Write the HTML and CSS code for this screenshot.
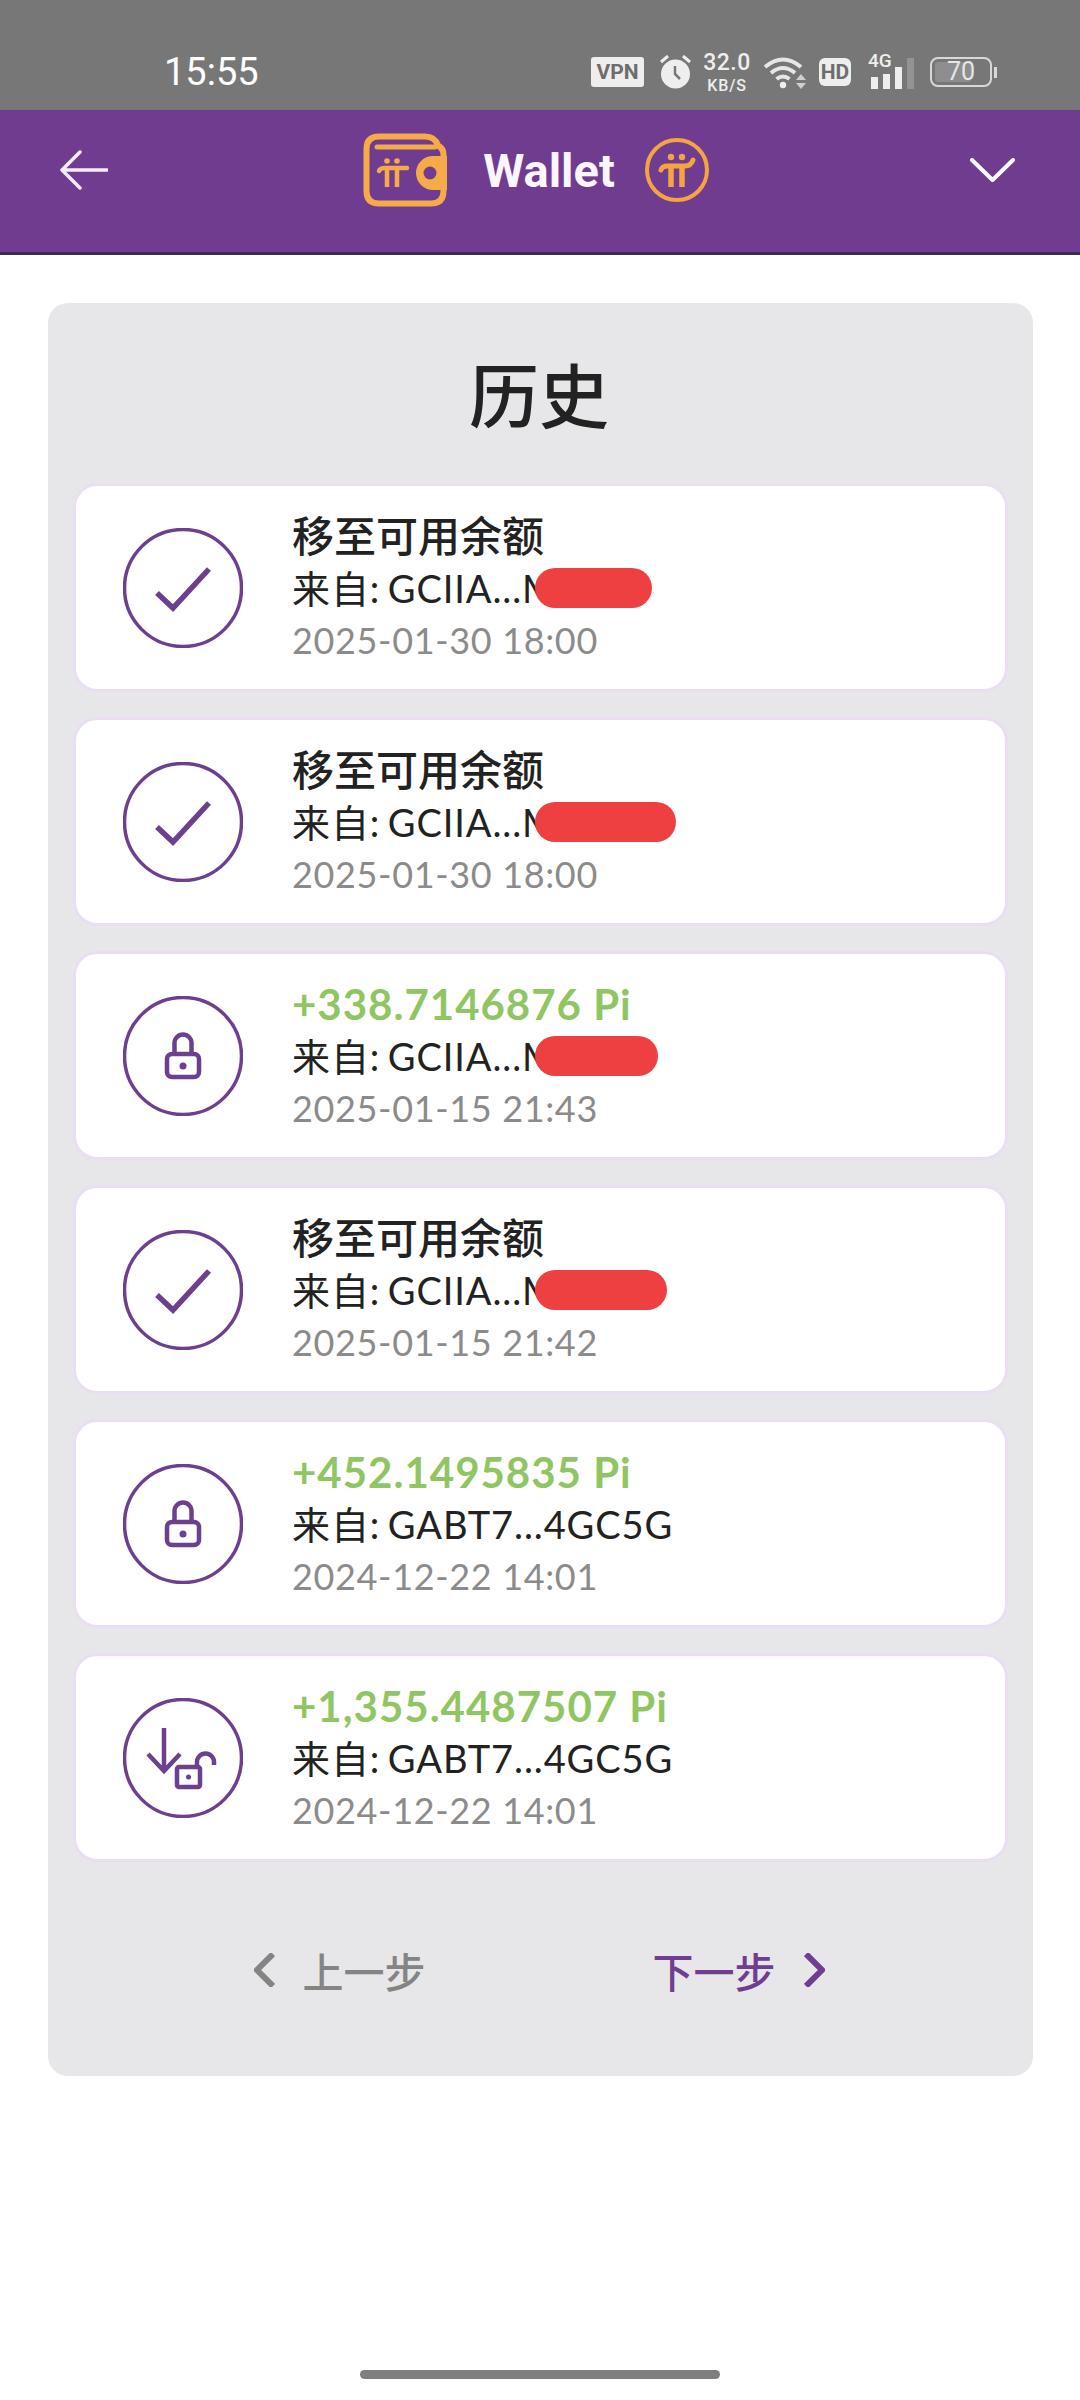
FILE: index.html
```html
<!DOCTYPE html>
<html lang="zh-CN">
<head>
<meta charset="UTF-8">
<meta name="viewport" content="width=device-width, initial-scale=1.0">
<title>Wallet</title>
<link rel="stylesheet" href="styles.css">
</head>
<body>

<div class="status-bar">
  <span class="time">15:55</span>
  <div class="status-icons">
    <span class="badge-vpn">VPN</span>
    <svg class="ic-alarm" width="31" height="34" viewBox="0 0 31 34">
      <circle cx="15.5" cy="19" r="14.5" fill="#eee"/>
      <path d="M15 11v8l5 5" fill="none" stroke="#777" stroke-width="2.5"/>
      <path d="M1 7l7-6M30 7l-7-6" fill="none" stroke="#eee" stroke-width="3"/>
    </svg>
    <div class="speed"><span class="speed-num">32.0</span><span class="speed-unit">KB/S</span></div>
    <svg width="43" height="34" viewBox="0 0 43 34">
      <g fill="none" stroke="#e6e6e6" stroke-width="4">
        <path d="M2 12Q20-3 38 12"/>
        <path d="M8 18Q20 8 32 18"/>
        <path d="M13.5 24Q20 19 26.5 24"/>
      </g>
      <circle cx="20" cy="30" r="3.2" fill="#eee"/>
      <path d="M38 19l5 6H33zM33 28h10l-5 6z" fill="#cfcfcf"/>
    </svg>
    <span class="badge-hd">HD</span>
    <div class="signal">
      <span class="signal-label">4G</span>
      <svg width="46" height="32" viewBox="0 0 46 32">
        <rect x="3" y="20" width="7" height="12" fill="#eee"/>
        <rect x="15" y="17" width="7" height="15" fill="#eee"/>
        <rect x="27" y="10" width="7" height="22" fill="#eee"/>
        <rect x="39" y="1" width="7" height="31" fill="#939393"/>
      </svg>
    </div>
    <div class="battery">
      <div class="battery-body"><span class="battery-fill"></span><span class="battery-num">70</span></div>
      <span class="battery-tip"></span>
    </div>
  </div>
</div>

<div class="app-header">
  <svg width="48" height="40" viewBox="0 0 48 40">
    <path d="M47 20H3M20 2L2 20l18 18" fill="none" stroke="#f6ecf9" stroke-width="3.5" stroke-linecap="round" stroke-linejoin="round"/>
  </svg>
  <div class="header-center">
    <svg class="wallet-logo" width="84" height="74" viewBox="0 0 84 74">
      <path d="M16 3.500H62q10 0 13 9 5.500 3 5.500 9V58q0 12.500-12.500 12.500H16Q3.500 70.500 3.500 58V16Q3.500 3.500 16 3.500z" fill="none" stroke="#f6ab49" stroke-width="6"/>
      <path d="M14 14H72" stroke="#f6ab49" stroke-width="5" stroke-linecap="round"/>
      <path d="M84 23H70a17 17 0 0 0 0 34H84z" fill="#f6ab49"/>
      <circle cx="67" cy="40" r="6.500" fill="#703c8f"/>
      <path d="M16 38q1-3 6-3H44" fill="none" stroke="#f6ab49" stroke-width="4.500" stroke-linecap="round"/>
      <path d="M24 35V54M34 35V54" stroke="#f6ab49" stroke-width="4.500"/>
      <circle cx="24" cy="28" r="2.800" fill="#f6ab49"/>
      <circle cx="34" cy="28" r="2.800" fill="#f6ab49"/>
    </svg>
    <span class="header-title">Wallet</span>
    <svg class="pi-coin" width="64" height="64" viewBox="0 0 64 64">
      <circle cx="32" cy="32" r="30" fill="none" stroke="#f4a440" stroke-width="4"/>
      <path d="M16 32q1-4 7-4H40q6 0 8-6" fill="none" stroke="#f4a440" stroke-width="5" stroke-linecap="round"/>
      <path d="M26 28V49M37 28V49" stroke="#f4a440" stroke-width="5.500"/>
      <circle cx="26" cy="19" r="3.200" fill="#f4a440"/>
      <circle cx="37" cy="19" r="3.200" fill="#f4a440"/>
    </svg>
  </div>
  <svg width="45" height="24" viewBox="0 0 45 24">
    <path d="M2 2l20.500 20L43 2" fill="none" stroke="#fff" stroke-width="4" stroke-linecap="round" stroke-linejoin="round"/>
  </svg>
</div>

<div class="panel">
  <h1 class="panel-title">历史</h1>

  <div class="tx-list">
    <div class="tx-card">
      <svg class="tx-icon" viewBox="0 0 120 120"><circle cx="60" cy="60" r="58.500"/><path class="tx-check" d="M34 65l16 15 36-39"/></svg>
      <div class="tx-text">
        <div class="tx-title">移至可用余额</div>
        <div class="tx-from">来自: GCIIA...M<span class="redact redact-1"></span></div>
        <div class="tx-date">2025-01-30 18:00</div>
      </div>
    </div>

    <div class="tx-card">
      <svg class="tx-icon" viewBox="0 0 120 120"><circle cx="60" cy="60" r="58.500"/><path class="tx-check" d="M34 65l16 15 36-39"/></svg>
      <div class="tx-text">
        <div class="tx-title">移至可用余额</div>
        <div class="tx-from">来自: GCIIA...M<span class="redact redact-2"></span></div>
        <div class="tx-date">2025-01-30 18:00</div>
      </div>
    </div>

    <div class="tx-card">
      <svg class="tx-icon" viewBox="0 0 120 120"><circle cx="60" cy="60" r="58.500"/><rect x="44" y="58" width="32" height="23" rx="5"/><path d="M51.500 58V47a8.500 8.500 0 0 1 17 0V58"/><circle class="tx-dot" cx="60" cy="70" r="3.500"/></svg>
      <div class="tx-text">
        <div class="tx-amount">+338.7146876 Pi</div>
        <div class="tx-from">来自: GCIIA...M<span class="redact redact-3"></span></div>
        <div class="tx-date">2025-01-15 21:43</div>
      </div>
    </div>

    <div class="tx-card">
      <svg class="tx-icon" viewBox="0 0 120 120"><circle cx="60" cy="60" r="58.500"/><path class="tx-check" d="M34 65l16 15 36-39"/></svg>
      <div class="tx-text">
        <div class="tx-title">移至可用余额</div>
        <div class="tx-from">来自: GCIIA...M<span class="redact redact-4"></span></div>
        <div class="tx-date">2025-01-15 21:42</div>
      </div>
    </div>

    <div class="tx-card">
      <svg class="tx-icon" viewBox="0 0 120 120"><circle cx="60" cy="60" r="58.500"/><rect x="44" y="58" width="32" height="23" rx="5"/><path d="M51.500 58V47a8.500 8.500 0 0 1 17 0V58"/><circle class="tx-dot" cx="60" cy="70" r="3.500"/></svg>
      <div class="tx-text">
        <div class="tx-amount">+452.1495835 Pi</div>
        <div class="tx-from">来自: GABT7...4GC5G</div>
        <div class="tx-date">2024-12-22 14:01</div>
      </div>
    </div>

    <div class="tx-card">
      <svg class="tx-icon" viewBox="0 0 120 120"><circle cx="60" cy="60" r="58.500"/><path d="M41 30V73M25 56l16 17 16-17"/><rect x="54" y="69" width="23" height="20" rx="2"/><path d="M74 68V64a8.500 8.500 0 0 1 17 0v3"/><circle class="tx-dot" cx="65.500" cy="79" r="2.500"/></svg>
      <div class="tx-text">
        <div class="tx-amount">+1,355.4487507 Pi</div>
        <div class="tx-from">来自: GABT7...4GC5G</div>
        <div class="tx-date">2024-12-22 14:01</div>
      </div>
    </div>
  </div>

  <div class="pager">
    <div class="pager-btn pager-prev">
      <svg width="21" height="34" viewBox="0 0 21 34"><path d="M19 1L3 17l16 16" fill="none" stroke="currentColor" stroke-width="6"/></svg>
      <span>上一步</span>
    </div>
    <div class="pager-btn pager-next">
      <span>下一步</span>
      <svg width="21" height="34" viewBox="0 0 21 34"><path d="M2 1l16 16L2 33" fill="none" stroke="currentColor" stroke-width="6"/></svg>
    </div>
  </div>
</div>

<div class="home-bar"></div>

</body>
</html>
```

FILE: styles.css
```css
* {
  box-sizing: border-box;
}
body {
  margin: 0;
  height: 2400px;
  background-color: #fff;
  font-family: "Lato", "Noto Sans CJK SC", sans-serif;
  color: #222;
  display: flex;
  flex-direction: column;
  overflow: hidden;
}

/* status bar */
.status-bar {
  height: 110px;
  padding: 34px 83px 0 164px;
  background-color: #767776;
  display: flex;
  align-items: center;
  justify-content: space-between;
  color: #eee;
  font-family: "Roboto", sans-serif;
}
.time {
  font-size: 38px;
  color: #fff;
}
.status-icons {
  display: flex;
  align-items: center;
}
.badge-vpn {
  width: 53px;
  height: 30px;
  background-color: #eee;
  color: #6d6d6d;
  border-radius: 3px;
  font-size: 21px;
  font-weight: 700;
  line-height: 30px;
  text-align: center;
  margin-right: 16px;
}
.ic-alarm {
  margin-right: 12px;
}
.speed {
  width: 48px;
  margin-right: 12px;
  display: flex;
  flex-direction: column;
  align-items: center;
}
.speed-num {
  font-size: 23px;
  line-height: 27px;
  letter-spacing: 0.5px;
  font-weight: 500;
}
.speed-unit {
  font-size: 16px;
  line-height: 19px;
  letter-spacing: 0.8px;
  font-weight: 500;
}
.badge-hd {
  width: 32px;
  height: 28px;
  margin: 0 17px 0 13px;
  background-color: #eee;
  color: #6d6d6d;
  border-radius: 6px;
  font-size: 21px;
  font-weight: 700;
  line-height: 28px;
  text-align: center;
}
.signal {
  width: 46px;
  height: 34px;
  margin-right: 16px;
  position: relative;
  display: flex;
  align-items: flex-end;
}
.signal-label {
  position: absolute;
  left: 0;
  top: -3px;
  font-size: 19px;
  line-height: 18px;
  font-weight: 500;
}
.battery {
  display: flex;
  align-items: center;
}
.battery-body {
  width: 62px;
  height: 30px;
  padding: 3px;
  border: 2px solid #d8d8d8;
  border-radius: 8px;
  position: relative;
}
.battery-fill {
  display: block;
  width: 36px;
  height: 100%;
  background-color: #8e8e8e;
  border-radius: 3px;
}
.battery-num {
  position: absolute;
  left: 0;
  right: 0;
  top: 0;
  font-size: 25px;
  line-height: 26px;
  text-align: center;
  color: #e6e6e6;
}
.battery-tip {
  width: 3px;
  height: 11px;
  margin-left: 2px;
  background-color: #d8d8d8;
}

/* purple app header */
.app-header {
  height: 145px;
  padding: 0 65px 22px 60px;
  background-color: #703c8f;
  border-bottom: 3px solid #3d2a4e;
  display: flex;
  align-items: center;
  justify-content: space-between;
}
.header-center {
  display: flex;
  align-items: center;
  margin-right: 6px;
}
.wallet-logo {
  margin-right: 36px;
}
.header-title {
  font-family: "Roboto", sans-serif;
  font-size: 47px;
  font-weight: 700;
  color: #fbf6fd;
  margin-right: 30px;
}

/* history panel */
.panel {
  width: 985px;
  height: 1773px;
  margin: 48px 0 0 48px;
  padding: 0 25px;
  background-color: #e7e7ea;
  border-radius: 20px;
}
.panel-title {
  margin: 0;
  height: 180px;
  padding: 35px 3px 0 0;
  font-family: "Noto Sans CJK SC", sans-serif;
  font-size: 70px;
  font-weight: 500;
  line-height: 110px;
  text-align: center;
}
.tx-list {
  display: flex;
  flex-direction: column;
  gap: 25px;
}
.tx-card {
  height: 209px;
  padding-left: 47px;
  background-color: #fff;
  border: 3px solid #e9def2;
  border-radius: 24px;
  display: flex;
  align-items: center;
}
.tx-icon {
  width: 120px;
  height: 120px;
  margin-right: 49px;
  flex-shrink: 0;
  fill: none;
  stroke: #6d3f8f;
  stroke-width: 3.5;
}
.tx-icon rect,
.tx-icon path {
  stroke-width: 4.5;
}
.tx-icon .tx-check {
  stroke-width: 5.5;
}
.tx-icon .tx-dot {
  fill: #6d3f8f;
  stroke: none;
}
.tx-text {
  line-height: 52px;
}
.tx-title {
  font-size: 42px;
  font-weight: 500;
  color: #222;
}
.tx-amount {
  font-size: 42px;
  font-weight: 700;
  letter-spacing: 1px;
  color: #8fc662;
}
.tx-from {
  font-size: 38px;
  letter-spacing: 0.9px;
  word-spacing: -3px;
  color: #222;
  position: relative;
}
.tx-date {
  font-size: 36px;
  letter-spacing: 0.65px;
  color: #8b8b8b;
}
.redact {
  position: absolute;
  left: 243px;
  top: 6px;
  height: 40px;
  background-color: #ee4040;
  border-radius: 20px;
}
.redact-1 {
  width: 117px;
}
.redact-2 {
  width: 141px;
}
.redact-3 {
  width: 123px;
}
.redact-4 {
  width: 132px;
}

/* prev / next */
.pager {
  margin-top: 78px;
  padding-right: 3px;
  display: flex;
  justify-content: center;
  gap: 227px;
}
.pager-btn {
  display: flex;
  align-items: center;
  gap: 28px;
  font-family: "Noto Sans CJK SC", sans-serif;
  font-size: 41px;
  font-weight: 500;
  line-height: 60px;
}
.pager-prev {
  color: #848484;
}
.pager-next {
  color: #6f3e91;
}

.home-bar {
  width: 360px;
  height: 9px;
  margin: 294px auto 0;
  background-color: #7f7f7f;
  border-radius: 5px;
}
```
